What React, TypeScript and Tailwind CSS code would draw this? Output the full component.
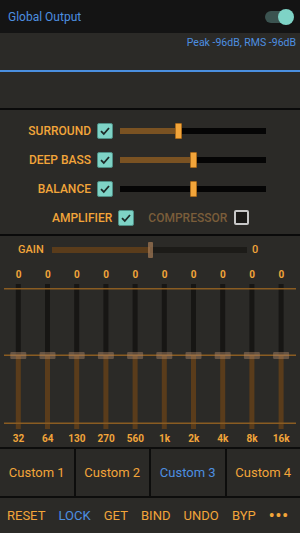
import React from 'react';

function Check({ on }: { on: boolean }) {
  if (!on) {
    return <div className="w-[15px] h-[15px] rounded-[2px] border-2 border-[#c8c8c8] bg-[#1b1a18]" />;
  }
  return (
    <div className="w-[16px] h-[16px] rounded-[2px] bg-[#7ed3c6] border border-[#4f8f86] flex items-center justify-center">
      <svg width="12" height="12" viewBox="0 0 12 12">
        <path d="M2 6.2 L4.8 9 L10 3" fill="none" stroke="#1d2a28" strokeWidth="1.8" />
      </svg>
    </div>
  );
}

function HSlider({ pos, fill }: { pos: number; fill: boolean }) {
  return (
    <div className="relative w-[146px] h-[16px] flex items-center">
      <div className="w-full h-[6px] bg-[#050505]" />
      {fill && <div className="absolute left-0 top-[5px] h-[6px] bg-[#7a5222]" style={{ width: pos }} />}
      <div
        className="absolute top-0 w-[7px] h-[16px] bg-[#f2a53a] border border-[#a86a1c] rounded-[1px]"
        style={{ left: pos - 3 }}
      />
    </div>
  );
}

function Row({ label, pos, fill }: { label: string; pos: number; fill: boolean }) {
  return (
    <div className="h-[29px] flex items-center">
      <div className="w-[91px] text-right text-[12px] font-medium text-[#f2a53a]">{label}</div>
      <div className="ml-[6px]">
        <Check on />
      </div>
      <div className="ml-[7px]">
        <HSlider pos={pos} fill={fill} />
      </div>
    </div>
  );
}

const freqs = ['32', '64', '130', '270', '560', '1k', '2k', '4k', '8k', '16k'];

function Eq() {
  const xs = freqs.map((_, i) => 18.3 + i * 29.2);
  return (
    <svg width="300" height="148" viewBox="0 0 300 148" className="block">
      {xs.map((x, i) => (
        <g key={i}>
          <rect x={x - 2.5} y={0} width={5} height={71} fill="#171614" />
          <rect x={x - 2.5} y={71} width={5} height={74} fill="#5a3c1b" />
        </g>
      ))}
      <rect x={4} y={4} width={292} height={1.5} fill="#8a5c22" />
      <rect x={4} y={70.5} width={292} height={1.5} fill="#8a5c22" />
      <rect x={4} y={138.5} width={292} height={1.5} fill="#8a5c22" />
      {xs.map((x, i) => (
        <rect key={i} x={x - 8} y={68} width={16} height={7} rx={1} fill="#b08868" fillOpacity={0.45} />
      ))}
    </svg>
  );
}

export default function App() {
  return (
    <div
      className="w-[300px] h-[533px] bg-[#2b2a27] flex flex-col overflow-hidden"
      style={{ fontFamily: 'Roboto, "Liberation Sans", sans-serif' }}
    >
      <div className="h-[33px] bg-[#141414] flex items-center justify-between pl-[8px] pr-[6px]">
        <span className="text-[12px] text-[#4d8fe0]">Global Output</span>
        <div className="relative w-[29px] h-[18px] flex items-center">
          <div className="w-[22px] h-[12px] rounded-full bg-[#3b5350]" />
          <div className="absolute right-0 top-[1px] w-[16px] h-[16px] rounded-full bg-[#7ed3c6]" />
        </div>
      </div>

      <div className="h-[77px] flex flex-col border-b-2 border-[#0a0a0a]">
        <div className="text-right pr-[4px] pt-[3px] text-[10.5px] leading-[13px] text-[#4d8fe0]">
          Peak -96dB, RMS -96dB
        </div>
        <div className="mt-[21px] h-[2px] bg-[#4a8fe0]" />
      </div>

      <div className="h-[126px] pt-[6px] border-b-2 border-[#0a0a0a]">
        <Row label="SURROUND" pos={58} fill />
        <Row label="DEEP BASS" pos={73} fill />
        <Row label="BALANCE" pos={73} fill={false} />
        <div className="h-[29px] flex items-center pl-[52px]">
          <span className="text-[12px] font-medium text-[#f2a53a]">AMPLIFIER</span>
          <div className="ml-[6px]">
            <Check on />
          </div>
          <span className="ml-[14px] text-[12px] font-medium text-[#7a5d3a]">COMPRESSOR</span>
          <div className="ml-[7px]">
            <Check on={false} />
          </div>
        </div>
      </div>

      <div className="h-[28px] flex items-center pl-[18px]">
        <span className="text-[11px] font-medium text-[#f2a53a] w-[34px]">GAIN</span>
        <div className="relative w-[195px] h-[16px] flex items-center">
          <div className="w-full h-[6px] bg-[#1c1b18]" />
          <div className="absolute left-0 top-[5px] h-[6px] w-[98px] bg-[#5a3c1b]" />
          <div className="absolute left-[96px] top-0 w-[5px] h-[16px] bg-[#a57a55] opacity-70 rounded-[1px]" />
        </div>
        <span className="ml-[5px] text-[11px] font-medium text-[#f2a53a]">0</span>
      </div>

      <div className="flex pl-[4px] h-[20px] items-center">
        {freqs.map((f) => (
          <div key={f} className="w-[29.2px] text-center text-[10px] font-bold text-[#f2a53a]">
            0
          </div>
        ))}
      </div>

      <Eq />

      <div className="flex pl-[4px] h-[16px] items-center -mt-[2px]">
        {freqs.map((f) => (
          <div key={f} className="w-[29.2px] text-center text-[10px] font-bold text-[#f2a53a]">
            {f}
          </div>
        ))}
      </div>

      <div className="mt-[1px] h-[51px] flex bg-[#0d0d0c] gap-[2px] border-y-2 border-[#0d0d0c]">
        {['Custom 1', 'Custom 2', 'Custom 3', 'Custom 4'].map((c) => (
          <div
            key={c}
            className={`flex-1 bg-[#2b2a27] flex items-center justify-center text-[13px] ${
              c === 'Custom 3' ? 'text-[#4d8fe0]' : 'text-[#f2a53a]'
            }`}
          >
            {c}
          </div>
        ))}
      </div>

      <div className="flex-1 flex items-center justify-between pl-[7px] pr-[11px] text-[13px] text-[#f2a53a]">
        <span>RESET</span>
        <span className="text-[#4d8fe0]">LOCK</span>
        <span>GET</span>
        <span>BIND</span>
        <span>UNDO</span>
        <span>BYP</span>
        <span className="text-[16px] tracking-[1px] font-bold leading-none">•••</span>
      </div>
    </div>
  );
}
